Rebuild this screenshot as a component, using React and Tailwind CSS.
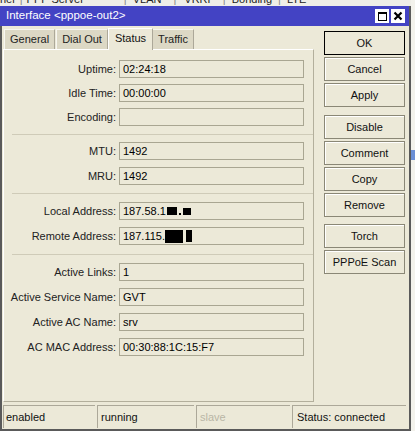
import React from 'react';

const GROUPS = [
  [
    ['Uptime:', '02:24:18'],
    ['Idle Time:', '00:00:00'],
    ['Encoding:', ''],
  ],
  [
    ['MTU:', '1492'],
    ['MRU:', '1492'],
  ],
  [
    ['Local Address:', 'local'],
    ['Remote Address:', 'remote'],
  ],
  [
    ['Active Links:', '1'],
    ['Active Service Name:', 'GVT'],
    ['Active AC Name:', 'srv'],
    ['AC MAC Address:', '00:30:88:1C:15:F7'],
  ],
];

const Value = ({ v }) => {
  if (v === 'local')
    return (
      <span className="flex items-center">
        187.58.1
        <span className="inline-block w-[10px] h-[8px] bg-black ml-[1px]" />
        <span className="inline-block w-[2px] h-[2px] bg-black ml-[2px] mt-[6px]" />
        <span className="inline-block w-[8px] h-[7px] bg-black ml-[2px]" />
      </span>
    );
  if (v === 'remote')
    return (
      <span className="flex items-center">
        187.115.
        <span className="inline-block w-[18px] h-[13px] bg-black" />
        <span className="inline-block w-[6px] h-[12px] bg-black ml-[3px]" />
      </span>
    );
  return <span>{v}</span>;
};

const Row = ({ label, value }) => (
  <div className="flex items-center h-[18px]">
    <div className="w-[112px] text-right text-[#222] whitespace-nowrap">{label}</div>
    <div className="ml-[3px] w-[185px] h-[18px] border border-[#a9a692] bg-[#ece9d8] flex items-center pl-[3px] text-black">
      <Value v={value} />
    </div>
  </div>
);

const Btn = ({ children, def }) => (
  <div
    className={`h-[24px] w-[81px] flex items-center justify-center bg-[#ece9d8] text-[#111] ${
      def ? 'border border-black' : 'border border-[#8a8776] shadow-[inset_1px_1px_0_#fff]'
    }`}
  >
    {children}
  </div>
);

export default function App() {
  return (
    <div className="w-[415px] h-[431px] overflow-hidden bg-[#f3f2ec] font-['Liberation_Sans',Arial,sans-serif] text-[11px] leading-none">
      <div className="h-[6px] overflow-hidden bg-[#efeee8] w-[411px]">
        <div className="-mt-[7px] flex text-[#222] text-[11px] leading-[12px] whitespace-nowrap">
          <span>nel</span>
          <span className="ml-[5px] text-[#888]">|</span>
          <span className="ml-[4px]">PPP Server</span>
          <span className="ml-[40px] text-[#888]">|</span>
          <span className="ml-[6px]">VLAN</span>
          <span className="ml-[12px] text-[#888]">|</span>
          <span className="ml-[8px]">VRRP</span>
          <span className="ml-[8px] text-[#888]">|</span>
          <span className="ml-[6px]">Bonding</span>
          <span className="ml-[6px] text-[#888]">|</span>
          <span className="ml-[6px]">LTE</span>
        </div>
      </div>
      <div className="flex">
        <div className="w-[411px] h-[425px] flex flex-col border-r-2 border-b-2 border-[#5a5a5a]">
          <div className="h-[20px] bg-[#4343c4] flex items-center justify-between pl-[6px] pr-[4px] text-white">
            <span className="text-[11.5px]">Interface &lt;pppoe-out2&gt;</span>
            <div className="flex gap-[2px]">
              <div className="w-[14px] h-[14px] bg-white flex items-center justify-center">
                <div className="w-[9px] h-[9px] border border-black border-t-2" />
              </div>
              <div className="w-[14px] h-[14px] bg-white flex items-center justify-center">
                <svg width="10" height="10" viewBox="0 0 10 10">
                  <path d="M1.5 1.5 L8.5 8.5 M8.5 1.5 L1.5 8.5" stroke="#000" strokeWidth="2.2" />
                </svg>
              </div>
            </div>
          </div>
          <div className="flex-1 flex flex-col bg-[#ece9d8] border-l-2 border-[#5a5a5a]">
            <div className="flex-1 flex">
              <div className="w-[312px] pl-[1px] pt-[1px] flex flex-col">
                <div className="flex items-end h-[22px] relative z-10">
                  <div className="ml-[1px] h-[20px] px-[5px] flex items-center bg-[#dcd8c5] border-l border-t border-[#f7f6f0] border-r-[#aca899] border-r text-[#222]">General</div>
                  <div className="ml-[1px] h-[20px] px-[5px] flex items-center bg-[#dcd8c5] border-l border-t border-[#f7f6f0] border-r-[#aca899] border-r text-[#222]">Dial Out</div>
                  <div className="h-[22px] px-[6px] pb-[3px] flex items-center bg-[#ece9d8] border-l border-t border-white border-r border-r-[#aca899] -mb-[1px] text-[#111]">Status</div>
                  <div className="h-[20px] px-[5px] flex items-center bg-[#dcd8c5] border-t border-[#f7f6f0] border-r border-r-[#aca899] text-[#222]">Traffic</div>
                </div>
                <div className="flex-1 border border-[#b3af9c] border-l-white border-t-white mb-[3px] pt-[10px] flex flex-col">
                  {GROUPS.map((g, gi) => (
                    <React.Fragment key={gi}>
                      {gi > 0 && (
                        <div
                          className={`${gi === 1 ? 'mt-[8px] mb-[7px]' : gi === 2 ? 'mt-[8px] mb-[8px]' : 'mt-[9px] mb-[8px]'} ml-[8px] h-px bg-[#cfcbb8]`}
                        />
                      )}
                      <div className={`flex flex-col ${gi === 0 ? 'gap-[6px]' : 'gap-[7px]'}`}>
                        {g.map(([l, v]) => (
                          <Row key={l} label={l} value={v} />
                        ))}
                      </div>
                    </React.Fragment>
                  ))}
                </div>
              </div>
              <div className="pl-[10px] pt-[5px] flex flex-col">
                <div className="flex flex-col gap-[2px]">
                  <Btn def>OK</Btn>
                  <Btn>Cancel</Btn>
                  <Btn>Apply</Btn>
                </div>
                <div className="flex flex-col gap-[2px] mt-[8px]">
                  <Btn>Disable</Btn>
                  <Btn>Comment</Btn>
                  <Btn>Copy</Btn>
                  <Btn>Remove</Btn>
                </div>
                <div className="flex flex-col gap-[2px] mt-[7px]">
                  <Btn>Torch</Btn>
                  <Btn>PPPoE Scan</Btn>
                </div>
              </div>
            </div>
            <div className="h-[23px] flex pl-[1px] pr-[3px] gap-[2px] mb-[1px]">
              <div className="w-[92px] flex items-center pl-[2px] border-l border-t border-[#aca899] text-[#111]">enabled</div>
              <div className="w-[97px] flex items-center pl-[3px] border-l border-t border-[#aca899] text-[#111]">running</div>
              <div className="w-[94px] flex items-center pl-[3px] border-l border-t border-[#aca899] text-[#b9b6a6]">slave</div>
              <div className="flex-1 flex items-center pl-[4px] border-l border-t border-[#aca899] text-[#111]">Status: connected</div>
            </div>
          </div>
        </div>
        <div className="flex-1 flex flex-col">
          <div className="h-[144px]" />
          <div className="h-[10px] bg-[#6b8fd6]" />
        </div>
      </div>
    </div>
  );
}
